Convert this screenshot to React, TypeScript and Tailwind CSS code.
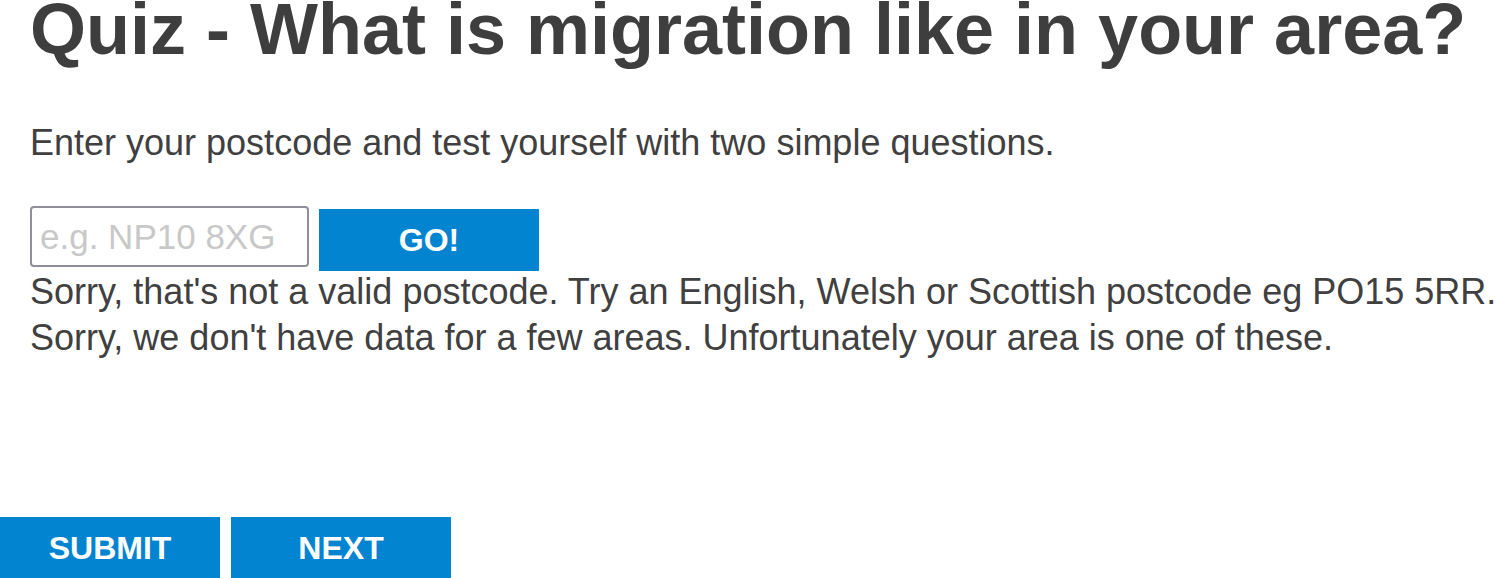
export default function App() {
  return (
    <div className="min-h-[578px] w-[1495px] overflow-hidden bg-white font-['Liberation_Sans',Arial,sans-serif] text-[#404040]">
      <div className="pl-[30px]">
        <h1 className="whitespace-nowrap text-[72px] leading-[58px] font-bold text-[#3e3e3e]">
          Quiz - What is migration like in your area?
        </h1>
        <p className="mt-[62px] text-[36px] leading-[46px]">
          Enter your postcode and test yourself with two simple questions.
        </p>
        <div className="mt-[40px] flex items-start gap-[10px]">
          <input
            type="text"
            placeholder="e.g. NP10 8XG"
            className="h-[61px] w-[279px] rounded-[4px] border-2 border-[#8f8e9c] bg-white px-[8px] text-[35px] text-[#404040] outline-none placeholder:text-[#c8c8c8]"
          />
          <button className="mt-[3px] flex h-[62px] w-[220px] items-center justify-center bg-[#0284d1] text-[32px] font-bold text-white">
            GO!
          </button>
        </div>
        <div className="-mt-[2px] whitespace-nowrap text-[36px] leading-[46px]">
          <p>Sorry, that's not a valid postcode. Try an English, Welsh or Scottish postcode eg PO15 5RR.</p>
          <p>Sorry, we don't have data for a few areas. Unfortunately your area is one of these.</p>
        </div>
      </div>
      <div className="mt-[156px] flex gap-[11px]">
        <button className="flex h-[61px] w-[220px] items-center justify-center bg-[#0284d1] text-[32px] font-bold text-white">
          SUBMIT
        </button>
        <button className="flex h-[61px] w-[220px] items-center justify-center bg-[#0284d1] text-[32px] font-bold text-white">
          NEXT
        </button>
      </div>
    </div>
  )
}
